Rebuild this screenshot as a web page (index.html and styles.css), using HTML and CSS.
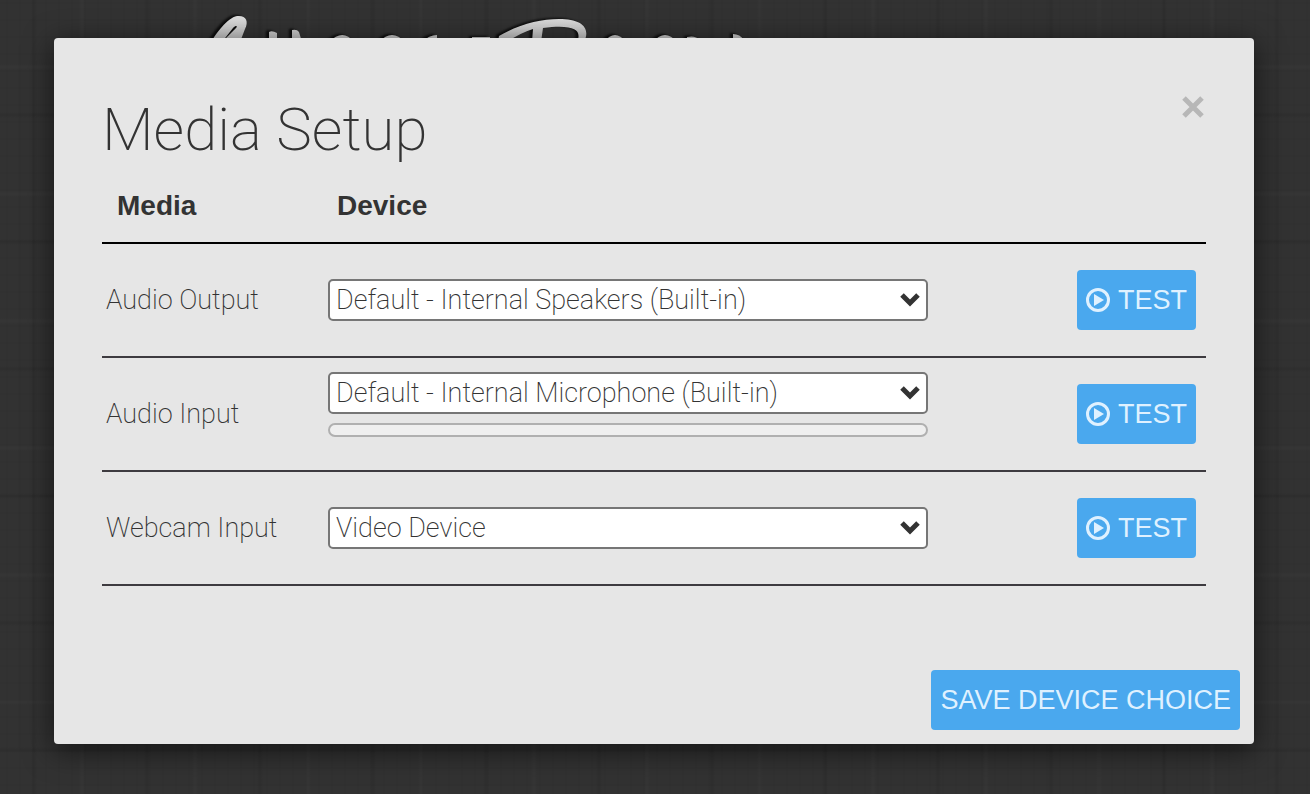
FILE: index.html
```
<!DOCTYPE html>
<html lang="en">
<head>
  <meta charset="UTF-8">
  <title>Media Setup</title>
  <meta name="viewport" content="width=device-width, initial-scale=1.0">
  <link rel="stylesheet" href="styles.css">
</head>
<body>
  <!-- site logo, mostly covered by the dialog -->
  <svg class="logo" width="800" height="60" viewBox="0 0 800 60" aria-hidden="true">
    <defs>
      <linearGradient id="silver" gradientUnits="userSpaceOnUse" x1="0" y1="14" x2="0" y2="42">
        <stop offset="0" stop-color="#e2e2e2"/>
        <stop offset="1" stop-color="#bcbcbc"/>
      </linearGradient>
    </defs>
    <g fill="url(#silver)">
      <path d="M211 42C216 34 227 18 237 16C246 15 249 21 245 29L240 42H222L236 28C238 26 236 25 233 28L222 42Z"/>
      <path d="M269 42V32Q272 30 277 33V42ZM292 42V30Q297 29 299 32L302 42Z"/>
      <path d="M329 42Q343 28 354 42ZM379 42Q392 28 405 42ZM422 42Q429 35 437 35V42ZM472 37H490V42H472Z"/>
      <path d="M604 42Q615 28 626 42ZM653 42Q665 28 677 42ZM687 37Q695 35 700 40V42H687ZM733 34Q740 34 744 40L740 42H733Z"/>
      <path fill-rule="evenodd" d="M498 42L499 36C520 24 540 19 559 19C582 19 591 28 584 42H577C582 31 576 24 543 28L541 42H532L533 29Q520 33 507 42Z"/>
    </g>
  </svg>

  <div class="overlay">
    <div class="modal" role="dialog" aria-labelledby="modalTitle">
      <div class="modal-header">
        <h1 id="modalTitle">Media Setup</h1>
        <button class="close" type="button" aria-label="Close">
          <svg width="22" height="22" viewBox="0 0 22 22"><path d="M2 2L20 20M20 2L2 20"/></svg>
        </button>
      </div>

      <table class="devices">
        <thead>
          <tr>
            <th class="col-media">Media</th>
            <th class="col-device">Device</th>
            <th></th>
          </tr>
        </thead>
        <tbody>
          <tr>
            <td><label for="audioOutput">Audio Output</label></td>
            <td>
              <div class="select">
                <select id="audioOutput">
                  <option>Default - Internal Speakers (Built-in)</option>
                </select>
                <svg width="20" height="14" viewBox="0 0 20 14"><path d="M2 2L10 10L18 2"/></svg>
              </div>
            </td>
            <td class="action">
              <button class="btn" type="button">
                <svg class="play" width="24" height="24" viewBox="0 0 24 24"><circle cx="12" cy="12" r="10.500"/><path d="M8 6L18 12L8 18Z"/></svg>
                TEST
              </button>
            </td>
          </tr>
          <tr>
            <td><label for="audioInput">Audio Input</label></td>
            <td>
              <div class="input-level">
                <div class="select">
                  <select id="audioInput">
                    <option>Default - Internal Microphone (Built-in)</option>
                  </select>
                  <svg width="20" height="14" viewBox="0 0 20 14"><path d="M2 2L10 10L18 2"/></svg>
                </div>
                <div class="level" role="meter" aria-label="Input level" aria-valuenow="0"></div>
              </div>
            </td>
            <td class="action">
              <button class="btn" type="button">
                <svg class="play" width="24" height="24" viewBox="0 0 24 24"><circle cx="12" cy="12" r="10.500"/><path d="M8 6L18 12L8 18Z"/></svg>
                TEST
              </button>
            </td>
          </tr>
          <tr>
            <td><label for="webcamInput">Webcam Input</label></td>
            <td>
              <div class="select">
                <select id="webcamInput">
                  <option>Video Device</option>
                </select>
                <svg width="20" height="14" viewBox="0 0 20 14"><path d="M2 2L10 10L18 2"/></svg>
              </div>
            </td>
            <td class="action">
              <button class="btn" type="button">
                <svg class="play" width="24" height="24" viewBox="0 0 24 24"><circle cx="12" cy="12" r="10.500"/><path d="M8 6L18 12L8 18Z"/></svg>
                TEST
              </button>
            </td>
          </tr>
        </tbody>
      </table>

      <div class="modal-footer">
        <button class="btn" type="button">SAVE DEVICE CHOICE</button>
      </div>
    </div>
  </div>
</body>
</html>
```

FILE: styles.css
```
* {
  box-sizing: border-box;
}
body {
  margin: 0;
  min-height: 100vh;
  color: #333;
  font-family: Roboto, "Liberation Sans", sans-serif;
  font-size: 27px;
  font-weight: 200;
  background-color: #323232;
  /* dark linen */
  background-image:
    repeating-linear-gradient(90deg, transparent 0 31px, rgba(0,0,0,0.08) 34px, transparent 37px 79px, rgba(255,255,255,0.02) 82px, transparent 85px 113px),
    repeating-linear-gradient(0deg, transparent 0 41px, rgba(0,0,0,0.08) 44px, transparent 47px 89px, rgba(255,255,255,0.02) 92px, transparent 95px 127px),
    repeating-linear-gradient(90deg, transparent 0 5px, rgba(0,0,0,0.04) 7px, transparent 9px 13px),
    repeating-linear-gradient(0deg, transparent 0 7px, rgba(0,0,0,0.04) 9px, transparent 11px 17px);
}
.logo {
  position: absolute;
  top: 0;
  left: 0;
  filter: drop-shadow(-3px -1px 1px #0c0c0c);
}
.overlay {
  position: relative;
  padding: 38px 56px 50px 54px;
}
.modal {
  background-color: #e6e6e6;
  border-radius: 4px;
  padding: 48px 48px 14px;
  box-shadow: 0 6px 30px rgba(0,0,0,0.6);
}
.modal-header {
  display: flex;
  justify-content: space-between;
  align-items: flex-start;
  height: 84px;
}
h1 {
  margin: 0;
  font-size: 60px;
  font-weight: 200;
  line-height: 88px;
}
.close {
  display: flex;
  padding: 10px 2px;
  border: none;
  background: none;
  cursor: pointer;
}
.close path {
  stroke: #b7b7b7;
  stroke-width: 5;
}
.devices {
  width: 100%;
  border-collapse: separate;
  border-spacing: 0;
  table-layout: fixed;
}
th {
  height: 74px;
  padding: 0 0 0 15px;
  text-align: left;
  font-family: "Liberation Sans", sans-serif;
  font-size: 28px;
  font-weight: bold;
  border-bottom: 2px solid #000;
}
.col-media {
  width: 220px;
}
.col-device {
  width: 612px;
}
td {
  height: 114px;
  padding: 0 6px;
  border-bottom: 2px solid #3e3b40;
}
td:first-child {
  padding-left: 4px;
}
.select {
  display: grid;
  align-items: center;
}
.select select, .select svg {
  grid-area: 1 / 1;
}
.select svg {
  justify-self: end;
  margin-right: 8px;
  pointer-events: none;
}
.select path {
  fill: none;
  stroke: #333;
  stroke-width: 5;
}
select {
  appearance: none;
  width: 100%;
  height: 42px;
  padding: 0 32px 0 6px;
  border: 2px solid #767676;
  border-radius: 5px;
  background-color: white;
  color: #333;
  font: inherit;
}
.input-level {
  padding-bottom: 20px;
}
.level {
  height: 14px;
  margin-top: 9px;
  border: 2px solid #b0b0b0;
  border-radius: 7px;
  background-color: #efefef;
}
.action {
  padding-right: 10px;
  text-align: right;
}
.btn {
  display: inline-flex;
  align-items: center;
  gap: 8px;
  height: 60px;
  padding: 0 9px;
  border: none;
  border-radius: 4px;
  background-color: #4aa8ee;
  color: #dff1ff;
  font-family: "Liberation Sans", sans-serif;
  font-size: 27px;
  vertical-align: middle;
  white-space: nowrap;
  cursor: pointer;
}
.play circle {
  fill: none;
  stroke: #dff1ff;
  stroke-width: 3;
}
.play path {
  fill: #dff1ff;
}
.modal-footer {
  display: flex;
  justify-content: flex-end;
  margin-top: 84px;
  margin-right: -34px;
}
```
